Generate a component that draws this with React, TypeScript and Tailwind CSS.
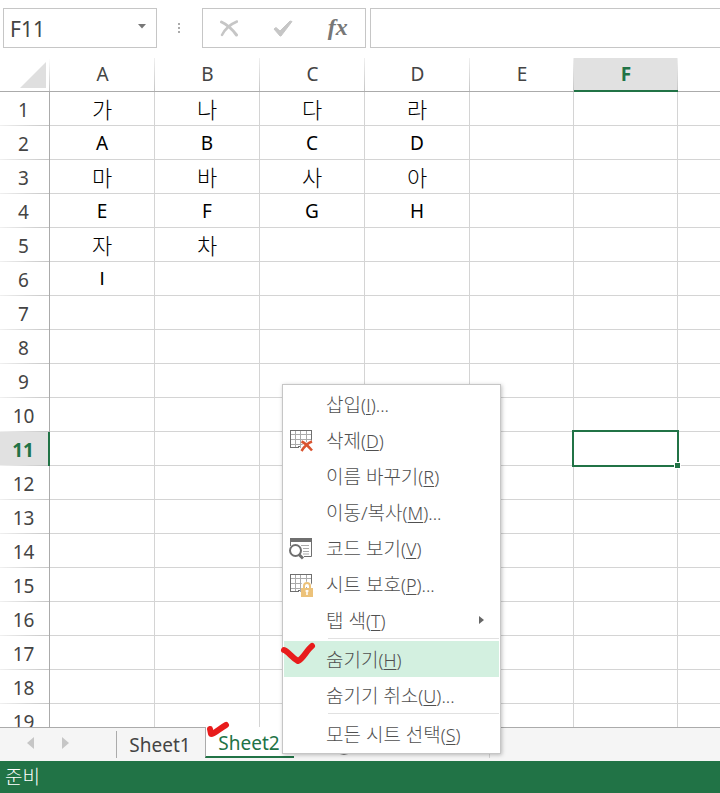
import { clsx } from 'clsx';
import { FC, ReactNode } from 'react';

const COLUMNS = ['A', 'B', 'C', 'D', 'E', 'F', ''];
const ROW_COUNT = 19;
const ACTIVE = { column: 5, row: 11 };

const VALUES: string[][] = [
  ['가', '나', '다', '라'],
  ['A', 'B', 'C', 'D'],
  ['마', '바', '사', '아'],
  ['E', 'F', 'G', 'H'],
  ['자', '차'],
  ['I'],
];

type MenuEntry = {
  label: string;
  accessKey: string;
  suffix?: string;
  icon?: ReactNode;
  submenu?: boolean;
  active?: boolean;
  separated?: boolean;
};

// Noto Sans draws a capital I with bars, Roboto draws a plain stem
const letterFont = (text?: string) => text === 'I' && "font-['Roboto',sans-serif]";

const isHangul = (text?: string) => !!text && text >= '가';

const SheetGrid: FC = () => (
  <g fill="none" stroke="#6f6f6f" shapeRendering="crispEdges">
    <path d="M6.500 1v18M11.500 1v18M17.500 1v16M1 5.500h21M1 10.500h21M1 15.500h18" stroke="#ababab" />
    <path d="M22.500 14V1.500H1.500v17H10M8 19l3-2" />
  </g>
);

const DeleteIcon: FC = () => (
  <svg width="24" height="24" viewBox="0 0 24 24" aria-hidden="true">
    <SheetGrid />
    <path d="M12.500 12.500C16 14 20 18 23 21.500M23 12.500C19 14 15 18 12.500 22" stroke="#fff" strokeWidth="4" fill="none" />
    <path d="M12.500 12.500C16 14 20 18 23 21.500M23 12.500C19 14 15 18 12.500 22" stroke="#d9532f" strokeWidth="2.500" fill="none" />
  </svg>
);

const CodeIcon: FC = () => (
  <svg width="24" height="24" viewBox="0 0 24 24" aria-hidden="true">
    <path d="M1 1h22v4H1z" fill="#6f6f6f" />
    <path d="M1.500 5v4M22.500 5v14.500H15" stroke="#6f6f6f" fill="none" />
    <path d="M12 8.500h8M14 11.500h6M14 14.500h6M14 17h6" stroke="#ababab" fill="none" />
    <circle cx="6.500" cy="13.500" r="5.500" fill="#fff" stroke="#6f6f6f" strokeWidth="2" />
    <path d="M10 17.500l4 4" stroke="#6f6f6f" strokeWidth="3" />
  </svg>
);

const ProtectIcon: FC = () => (
  <svg width="24" height="24" viewBox="0 0 24 24" aria-hidden="true">
    <SheetGrid />
    <path d="M12 14v-2a5 3 0 0 1 11 0v2" fill="#fff" />
    <path d="M15 15v-2a3 3 0 0 1 6 0v2" fill="none" stroke="#ecc27a" strokeWidth="2" />
    <path d="M12 15h12v9H12z" fill="#ecc27a" />
    <path d="M18 17v5M16.500 18h3" stroke="#fff" strokeWidth="1.500" />
  </svg>
);

const MENU: MenuEntry[] = [
  { label: '삽입', accessKey: 'I', suffix: '...' },
  { label: '삭제', accessKey: 'D', icon: <DeleteIcon /> },
  { label: '이름 바꾸기', accessKey: 'R' },
  { label: '이동/복사', accessKey: 'M', suffix: '...' },
  { label: '코드 보기', accessKey: 'V', icon: <CodeIcon /> },
  { label: '시트 보호', accessKey: 'P', suffix: '...', icon: <ProtectIcon /> },
  { label: '탭 색', accessKey: 'T', submenu: true },
  { label: '숨기기', accessKey: 'H', active: true, separated: true },
  { label: '숨기기 취소', accessKey: 'U', suffix: '...' },
  { label: '모든 시트 선택', accessKey: 'S', separated: true },
];

const FormulaBar: FC = () => (
  <div className="flex shrink-0 pt-2 pb-2.5 pl-[3px]">
    <div className="flex h-10 w-[154px] items-center border border-[#c6c6c6]">
      <input
        aria-label="이름 상자"
        defaultValue="F11"
        className="min-w-0 flex-1 pt-1 pl-1.5 text-[21px] text-[#444] outline-none"
      />
      <button type="button" aria-label="이름 목록" className="px-2.5 pb-1">
        <svg width="8" height="5" viewBox="0 0 8 5">
          <path d="M0 0h8L4 4.500z" fill="#777" />
        </svg>
      </button>
    </div>
    <div className="flex w-[45px] flex-col items-center justify-center gap-[2px] pr-0.5">
      <span className="size-[2px] bg-[#ababab]" />
      <span className="size-[2px] bg-[#ababab]" />
      <span className="size-[2px] bg-[#ababab]" />
    </div>
    <div className="flex h-10 w-[164px] items-center justify-around border border-[#c6c6c6]">
      <button type="button" aria-label="취소">
        <svg width="18" height="17" viewBox="0 0 18 17">
          <path d="M1.500 2C7 4.500 12 9 16.500 15" fill="none" stroke="#c6c6c6" strokeWidth="3" strokeLinecap="round" />
          <path d="M17 1.500C11 4 5 9 2 15" fill="none" stroke="#c6c6c6" strokeWidth="2.500" strokeLinecap="round" />
        </svg>
      </button>
      <button type="button" aria-label="입력">
        <svg width="20" height="17" viewBox="0 0 20 17">
          <path d="M1 9l2-1.500 4 3.500L17 1l2 .5L8 16H7z" fill="#c6c6c6" stroke="#c6c6c6" strokeLinejoin="round" />
        </svg>
      </button>
      <button
        type="button"
        aria-label="함수 삽입"
        className="pb-0.5 font-['Liberation_Serif',serif] text-[24px] leading-6 font-bold text-[#777] italic"
      >
        fx
      </button>
    </div>
    <input
      aria-label="수식 입력줄"
      className="ml-1 h-10 min-w-0 flex-1 border border-r-0 border-[#c6c6c6] px-2 text-[21px] outline-none"
    />
  </div>
);

const Grid: FC = () => (
  <div className="min-h-0 flex-1 overflow-hidden">
    <table className="w-full table-fixed border-separate border-spacing-0 text-center text-[19px] leading-6">
      <colgroup>
        <col className="w-[50px]" />
        <col className="w-[105px]" />
        <col className="w-[105px]" />
        <col className="w-[105px]" />
        <col className="w-[105px]" />
        <col className="w-[104px]" />
        <col className="w-[104px]" />
        <col />
      </colgroup>
      <thead>
        <tr>
          <th className="h-[34px] border-b border-[#ababab] bg-[linear-gradient(#fff,#c6c6c6)] bg-[length:1px_100%] bg-right bg-no-repeat p-0">
            <svg width="26" height="26" viewBox="0 0 26 26" className="ml-5" aria-hidden="true">
              <path d="M26 0v26H0z" fill="#dfdfdf" />
            </svg>
          </th>
          {COLUMNS.map((name, i) => (
            <th
              key={i}
              scope="col"
              className={clsx(
                'h-[34px] bg-[linear-gradient(#f0f0f0,#c6c6c6)] bg-[length:1px_100%] bg-right bg-no-repeat p-0 last:bg-none',
                i === ACTIVE.column
                  ? 'relative border-b-2 border-[#217346] bg-[#e1e1e1] font-bold text-[#217346]'
                  : 'border-b border-[#ababab] pb-0.5 font-normal text-[#444]',
              )}
            >
              {name}
            </th>
          ))}
        </tr>
      </thead>
      <tbody>
        {Array.from({ length: ROW_COUNT }, (_, r) => (
          <tr key={r}>
            <th
              scope="row"
              className={clsx(
                'h-[34px] bg-[linear-gradient(to_right,#f0f0f0,#c6c6c6)] bg-[length:100%_1px] bg-bottom bg-no-repeat p-0 pt-0.5 pr-0.5',
                r + 1 === ACTIVE.row
                  ? 'border-r-2 border-[#217346] bg-[#e1e1e1] font-bold text-[#217346]'
                  : 'border-r border-[#ababab] font-normal text-[#444]',
              )}
            >
              {r + 1}
            </th>
            {COLUMNS.map((_, c) => (
              <td
                key={c}
                className={clsx(
                  'relative h-[34px] border-r border-b border-[#d4d4d4] p-0 text-black last:border-r-0',
                  isHangul(VALUES[r]?.[c]) && 'text-[22px] font-light',
                  letterFont(VALUES[r]?.[c]),
                )}
              >
                {VALUES[r]?.[c]}
                {r + 1 === ACTIVE.row && c === ACTIVE.column && (
                  <>
                    <span className="absolute -inset-[2px] z-10 border-2 border-[#217346]" />
                    <span className="absolute -right-1 -bottom-1 z-10 size-[7px] border border-white bg-[#217346]" />
                  </>
                )}
              </td>
            ))}
          </tr>
        ))}
      </tbody>
    </table>
  </div>
);

const SheetTabs: FC = () => (
  <div className="flex h-[34px] shrink-0 border-t border-[#ababab] bg-[#f5f5f5] text-[19px]">
    <div className="flex w-[116px] items-center gap-7 pb-1 pl-[27px]">
      <button type="button" aria-label="이전 시트">
        <svg width="7" height="12" viewBox="0 0 7 12">
          <path d="M7 0v12L0 6z" fill="#c6c6c6" />
        </svg>
      </button>
      <button type="button" aria-label="다음 시트">
        <svg width="7" height="12" viewBox="0 0 7 12">
          <path d="M0 0v12l7-6z" fill="#c6c6c6" />
        </svg>
      </button>
    </div>
    <button
      type="button"
      className="my-[3px] w-[89px] border-l border-[#ababab] pr-0.5 pb-1 text-[#444]"
    >
      Sheet1
    </button>
    <button
      type="button"
      className="relative -mt-px mb-[3px] w-[89px] border-b-2 border-l border-b-[#217346] border-l-[#ababab] bg-white pt-0.5 pr-0.5 text-[#217346]"
    >
      Sheet2
      <svg width="24" height="18" viewBox="0 0 24 18" className="absolute -top-1.5 left-0" aria-hidden="true">
        <path d="M4 8l1 5c4 0 9-6 15-9" fill="none" stroke="#e81c1c" strokeWidth="6" strokeLinecap="round" strokeLinejoin="round" />
      </svg>
    </button>
    <button type="button" aria-label="새 시트" className="ml-10">
      <svg width="20" height="20" viewBox="0 0 20 20" fill="none" stroke="#777" strokeWidth="2">
        <circle cx="10" cy="10" r="9" />
        <path d="M10 5v10M5 10h10" />
      </svg>
    </button>
    <span className="my-[3px] ml-[135px] w-px bg-[#d4d4d4]" />
  </div>
);

const ContextMenu: FC = () => (
  <div
    role="menu"
    className="absolute bottom-[39px] left-[282px] z-20 w-[219px] border border-[#c6c6c6] bg-white p-px text-[19px] text-[#505050] shadow-[1px_1px_4px_rgba(0,0,0,0.25)]"
  >
    {MENU.map(({ label, accessKey, suffix, icon, submenu, active, separated }) => (
      <div key={label}>
        {separated && <div className="mb-[2px] ml-11 h-px bg-[#e1e1e1]" />}
        <button
          type="button"
          role="menuitem"
          className={clsx(
            'flex h-9 w-full items-center pl-[5px] text-left font-light whitespace-pre',
            active && 'bg-[#d3f0e0]',
          )}
        >
          <span className="w-[37px] shrink-0 pt-0.5">{icon}</span>
          <span className="flex-1 pt-0.5">
            {label}
            <span className="text-[18px]">
              (<u className={clsx('underline-offset-2', letterFont(accessKey))}>{accessKey}</u>)
              {suffix}
            </span>
          </span>
          {submenu && (
            <svg width="5" height="8" viewBox="0 0 5 8" className="mr-[15px]" aria-hidden="true">
              <path d="M0 0v8l5-4z" fill="#666" />
            </svg>
          )}
        </button>
      </div>
    ))}
    <svg width="38" height="26" viewBox="0 0 38 26" className="absolute bottom-[86px] -left-1" aria-hidden="true">
      <path d="M5 9c5 2 8 8 14 11 5-2 8-10 14-15" fill="none" stroke="#e81c1c" strokeWidth="6" strokeLinecap="round" strokeLinejoin="round" />
    </svg>
  </div>
);

const App: FC = () => (
  <div className="relative flex h-screen flex-col overflow-hidden bg-white font-['Noto_Sans','Noto_Sans_CJK_KR',sans-serif]">
    <FormulaBar />
    <Grid />
    <SheetTabs />
    <ContextMenu />
    <footer className="flex h-8 shrink-0 items-center bg-[#217346] pl-[5px] text-[19px] font-light text-white">
      준비
    </footer>
  </div>
);

export default App;
